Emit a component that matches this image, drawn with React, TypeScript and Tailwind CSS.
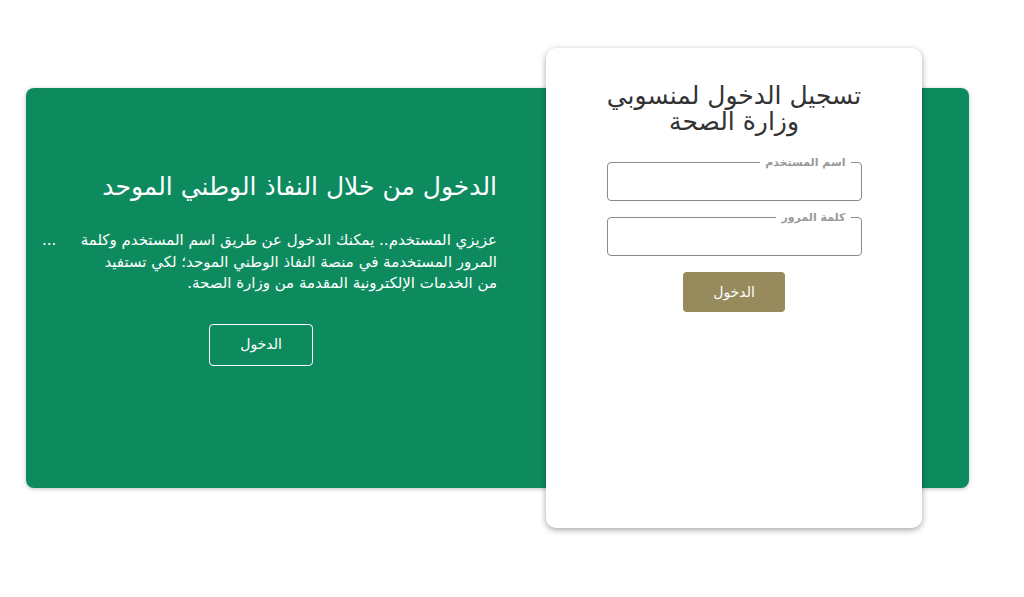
import React from 'react';

const font = { fontFamily: '"DejaVu Sans", "Noto Sans", sans-serif' };

const Field: React.FC<{ label: string; type?: string }> = ({ label, type = 'text' }) => (
  <fieldset dir="rtl" className="rounded-[4px] border border-[#8a8a8a] px-0 pb-0 pt-0">
    <legend className="mr-[10px] px-[5px] text-[11px] leading-[11px] font-bold text-[#999]">{label}</legend>
    <input type={type} className="block h-[32px] w-full bg-transparent px-3 text-[14px] outline-none" />
  </fieldset>
);

export default function App() {
  return (
    <div className="min-h-[597px] bg-white pl-[26px] pt-[88px]" style={font}>
      <div className="flex h-[400px] w-[943px] rounded-[8px] bg-[#0e8b5e] shadow-[0_1px_4px_rgba(0,0,0,0.25)]">
        {/* left: national access */}
        <div dir="rtl" className="flex w-[520px] flex-col pl-[16px] pr-[49px] pt-[82px] text-white">
          <h2 className="whitespace-nowrap text-[25px] leading-[34px]">الدخول من خلال النفاذ الوطني الموحد</h2>
          <div className="mt-[26px] text-[15px] leading-[21.5px]">
            <div className="flex justify-between">
              <span>عزيزي المستخدم.. يمكنك الدخول عن طريق اسم المستخدم وكلمة</span>
              <span>...</span>
            </div>
            <div className="whitespace-nowrap">المرور المستخدمة في منصة النفاذ الوطني الموحد؛ لكي تستفيد</div>
            <div>من الخدمات الإلكترونية المقدمة من وزارة الصحة.</div>
          </div>
          <button className="mr-[184px] mt-[29px] h-[42px] w-[104px] self-start rounded-[4px] border border-white text-[14px] text-white">
            الدخول
          </button>
        </div>

        {/* right: staff login card */}
        <div className="-my-[40px] flex w-[376px] flex-col items-center rounded-[10px] bg-white pt-[35px] shadow-[0_2px_6px_rgba(0,0,0,0.35)]">
          <h1 dir="rtl" className="w-[270px] text-center text-[25px] leading-[26px] text-[#333]">
            تسجيل الدخول لمنسوبي وزارة الصحة
          </h1>
          <div className="mt-[22px] flex w-[255px] flex-col gap-[11px]">
            <Field label="اسم المستخدم" />
            <Field label="كلمة المرور" type="password" />
          </div>
          <button className="mt-[16px] h-[40px] w-[102px] rounded-[4px] bg-[#978a5c] text-[14px] text-white">
            الدخول
          </button>
        </div>
      </div>
    </div>
  );
}
